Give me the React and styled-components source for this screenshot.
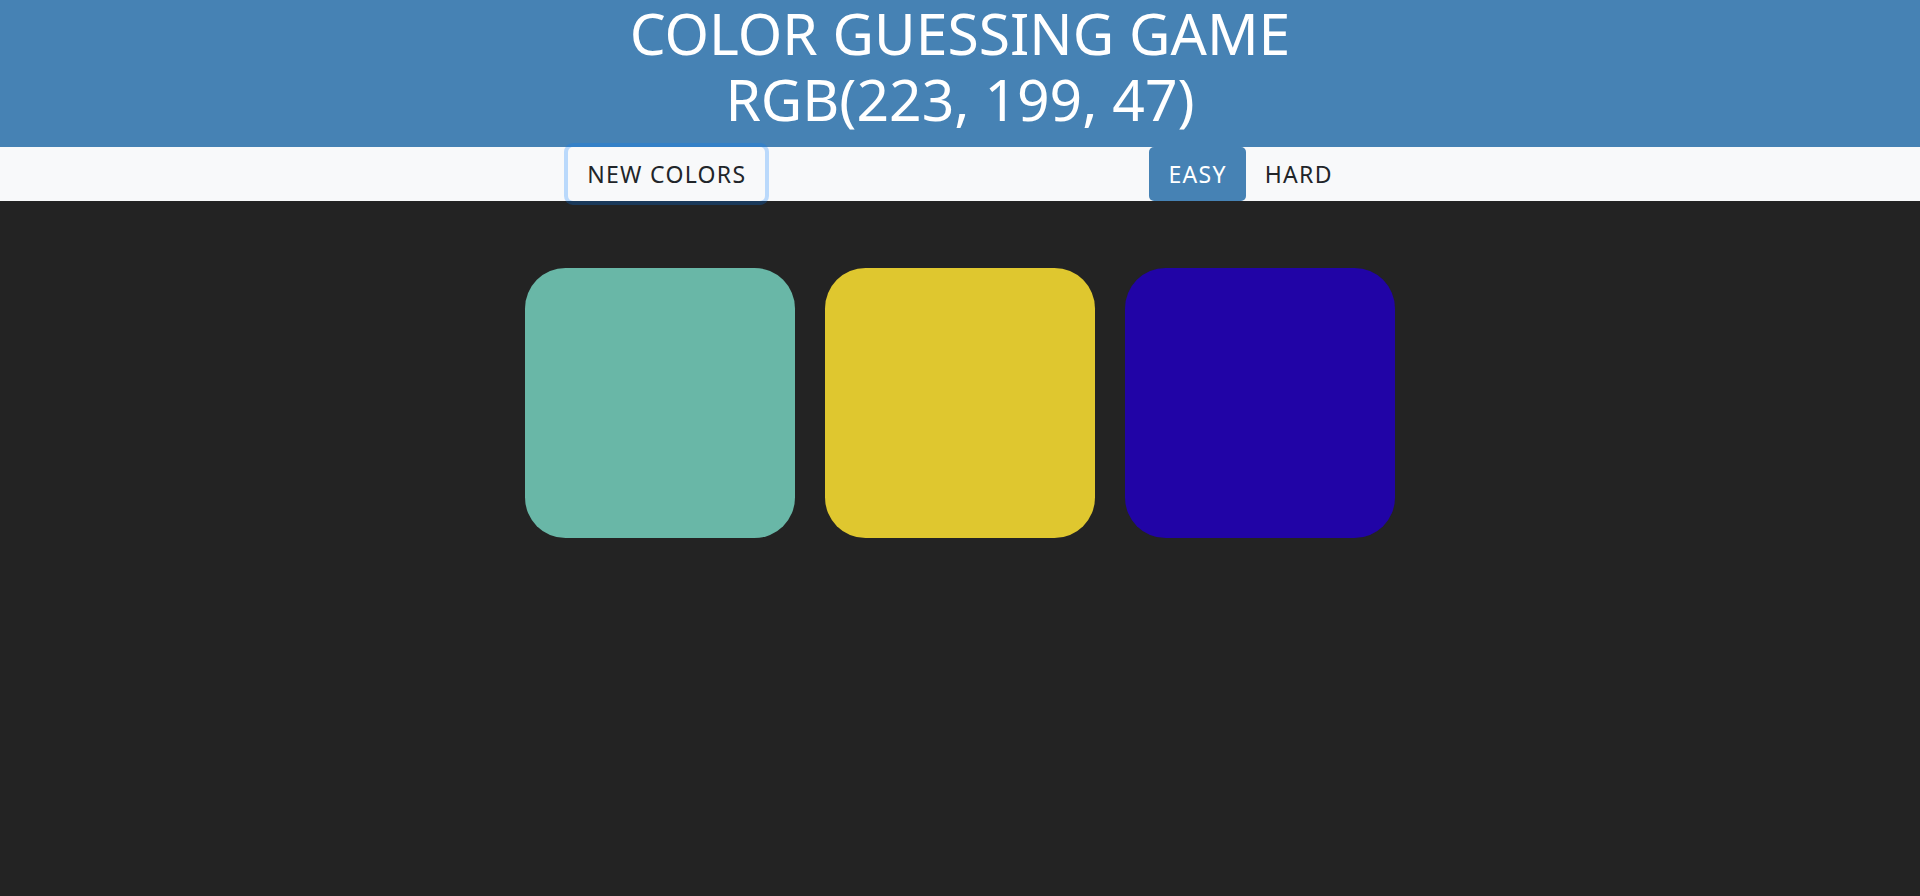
import React, { useState } from "react";
import styled, { createGlobalStyle } from "styled-components";

const GlobalStyle = createGlobalStyle`
  body {
    margin: 0;
    background: #232323;
    font-family: "Noto Sans", "Open Sans", sans-serif;
  }
`;

const Title = styled.h1`
  margin: 0;
  padding: 0 0 15px;
  background: steelblue;
  color: #fff;
  text-align: center;
  text-transform: uppercase;
  font-weight: normal;
  font-size: 57px;
  line-height: 66px;
`;

const ColorDisplay = styled.span`
  display: block;
`;

const Stripe = styled.div`
  display: flex;
  justify-content: center;
  height: 54px;
  background: #f8f9fa;
`;

const NavButton = styled.button`
  border: none;
  border-radius: 5px;
  padding: 0 ${props => props.$pad || 19}px;
  margin: 0;
  font-family: inherit;
  font-size: 23px;
  letter-spacing: 1.3px;
  text-transform: uppercase;
  color: ${props => (props.$active ? "#fff" : "#212529")};
  background: ${props => (props.$active ? "steelblue" : "transparent")};
  box-shadow: ${props => (props.$focused ? "0 0 0 4px rgba(0, 123, 255, 0.25)" : "none")};
  cursor: pointer;
  outline: none;
`;

const Message = styled.span`
  display: inline-block;
  width: 20%;
`;

const Container = styled.div`
  max-width: 900px;
  margin: 52px auto;
  display: flex;
  flex-wrap: wrap;
`;

const Square = styled.div`
  width: 270px;
  height: 270px;
  margin: 15px;
  border-radius: 15%;
  background: ${props => props.$color};
`;

const colors = ["rgb(105, 183, 167)", "rgb(223, 199, 47)", "rgb(33, 4, 166)"];

const App = () => {
  const [mode, setMode] = useState("easy");

  return (
    <>
      <GlobalStyle />
      <Title>
        Color Guessing Game
        <ColorDisplay>RGB(223, 199, 47)</ColorDisplay>
      </Title>
      <Stripe>
        <NavButton $focused $pad={19}>New Colors</NavButton>
        <Message></Message>
        <NavButton $active={mode === "easy"} onClick={() => setMode("easy")}>Easy</NavButton>
        <NavButton $active={mode === "hard"} onClick={() => setMode("hard")}>Hard</NavButton>
      </Stripe>
      <Container>
        {colors.map(c => (
          <Square key={c} $color={c} />
        ))}
      </Container>
    </>
  );
};

export default App;
